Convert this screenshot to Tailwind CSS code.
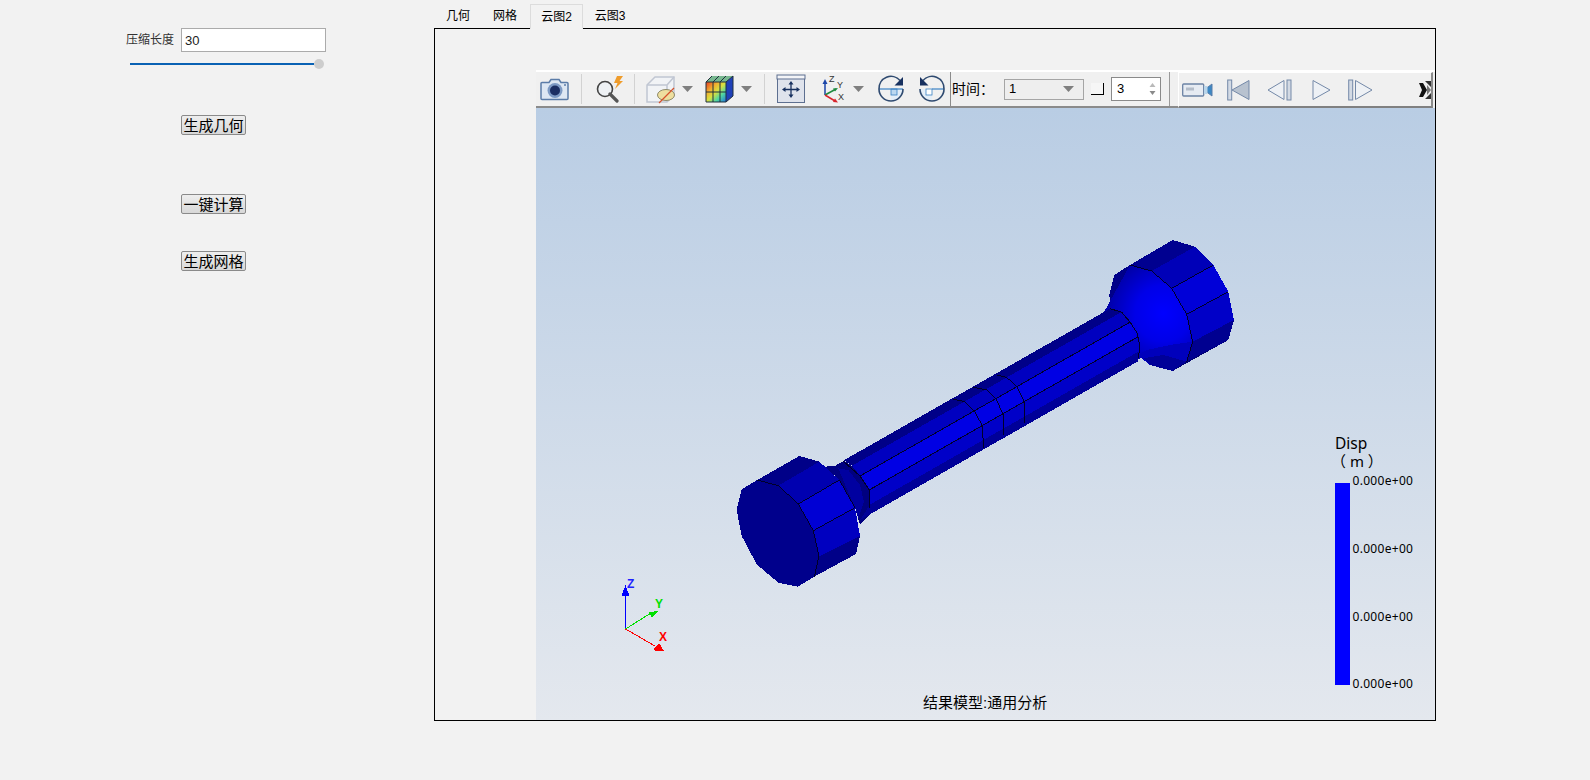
<!DOCTYPE html>
<html lang="zh">
<head>
<meta charset="UTF-8">
<title>压缩长度</title>
<script src="https://cdn.jsdelivr.net/npm/@tailwindcss/browser@4"></script>
</head>
<body class="bg-[#f2f2f2] text-black font-['Liberation_Sans','Noto_Sans_CJK_SC',sans-serif]">
<div class="flex w-[1590px] h-[780px] overflow-hidden">

  <!-- left panel -->
  <div class="w-[434px] shrink-0 flex flex-col items-start">
    <div class="mt-[28px] ml-[126px] flex items-center">
      <span class="w-[48px] text-[12px] leading-none text-[#333] whitespace-nowrap">压缩长度</span>
      <input value="30" class="ml-[7px] w-[145px] h-[24px] px-[3px] bg-white border border-[#ababab] text-[13px] text-[#222] outline-none">
    </div>
    <div class="mt-[7px] ml-[130px] w-[194px] h-[10px] flex items-center">
      <div class="flex-1 h-[2px] bg-[#0a62b4]"></div>
      <div class="w-[10px] h-[10px] rounded-full bg-[#cdcdcd]"></div>
    </div>
    <button class="mt-[46px] ml-[181px] w-[65px] h-[20px] border border-[#8a8a8a] rounded-[2px] bg-linear-to-b from-[#eeeeee] to-[#d8d8d8] text-[15px] leading-none whitespace-nowrap">生成几何</button>
    <button class="mt-[59px] ml-[181px] w-[65px] h-[20px] border border-[#8a8a8a] rounded-[2px] bg-linear-to-b from-[#eeeeee] to-[#d8d8d8] text-[15px] leading-none whitespace-nowrap">一键计算</button>
    <button class="mt-[37px] ml-[181px] w-[65px] h-[20px] border border-[#8a8a8a] rounded-[2px] bg-linear-to-b from-[#eeeeee] to-[#d8d8d8] text-[15px] leading-none whitespace-nowrap">生成网格</button>
  </div>

  <!-- right: tabs + frame -->
  <div class="w-[1002px] shrink-0 flex flex-col">
    <div class="h-[24px] mt-[4px] flex text-[12px] leading-none">
      <div class="w-[47px] pl-[12px] flex items-center">几何</div>
      <div class="w-[49px] pl-[12px] flex items-center">网格</div>
      <div class="w-[53px] h-[25px] flex items-center justify-center bg-[#f2f2f2] border border-[#dcdcdc] border-b-[#f2f2f2] z-10">云图2</div>
      <div class="w-[54px] flex items-center justify-center">云图3</div>
    </div>
    <div class="w-[1002px] h-[693px] border border-black pl-[101px] pt-[41px] flex flex-col">

      <!-- toolbar -->
      <div class="h-[38px] shrink-0 flex items-stretch bg-[#f0f0f0] border-t-2 border-t-white">
        <div class="w-[415px] flex items-center border-b-2 border-b-[#8b8b8b]">
          <svg class="ml-[4px]" width="30" height="26" viewBox="0 0 30 26">
            <path d="M2 6.500h7l2-3h8l2 3h6a1 1 0 0 1 1 1v15a1 1 0 0 1-1 1H2a1 1 0 0 1-1-1v-15a1 1 0 0 1 1-1z" fill="#dde7f3" stroke="#5b7ca8" stroke-width="1.500"/>
            <circle cx="15" cy="14.500" r="7.500" fill="#7d9ac4"/>
            <circle cx="15" cy="14.500" r="5" fill="#1c2f63"/>
            <circle cx="25" cy="9" r="1" fill="#5b7ca8"/>
          </svg>
          <div class="ml-[11px] w-px h-[30px] bg-[#d2d2d2]"></div>
          <svg class="ml-[14px]" width="28" height="28" viewBox="0 0 28 28">
            <circle cx="9" cy="14" r="7.500" fill="#eef1f4" stroke="#444" stroke-width="1.600"/>
            <path d="M14 19l7 7" stroke="#555" stroke-width="3.200" stroke-linecap="round"/>
            <path d="M21 1h6l-3.500 5H27l-8 8 2.500-6H18z" fill="#ef9c2b"/>
          </svg>
          <div class="ml-[10px] w-px h-[30px] bg-[#d2d2d2]"></div>
          <svg class="ml-[11px]" width="30" height="30" viewBox="0 0 30 30">
            <path d="M1 11l8-8h19v18l-7 7H1z" fill="#f1f3f6" stroke="#c0c6d2" stroke-width="1.500"/>
            <path d="M1 11h20v17M21 11l7-8" fill="none" stroke="#c0c6d2" stroke-width="1.500"/>
            <ellipse cx="20" cy="21" rx="8.500" ry="5.500" fill="#eedf9f" stroke="#8e8a6a"/>
            <path d="M13 29L28 14" stroke="#d6512a" stroke-width="1.200"/>
          </svg>
          <svg class="ml-[6px]" width="11" height="6" viewBox="0 0 11 6"><path d="M0 0h11L5.500 6z" fill="#7f7f7f"/></svg>
          <svg class="ml-[12px]" width="30" height="30" viewBox="0 0 30 30">
            <defs>
              <linearGradient id="rainbow" x1="0" y1="0" x2="1" y2="1">
                <stop offset="0" stop-color="#e83a20"/><stop offset=".3" stop-color="#f0b030"/><stop offset=".5" stop-color="#d8e040"/><stop offset=".72" stop-color="#50d8a0"/><stop offset="1" stop-color="#2070e0"/>
              </linearGradient>
            </defs>
            <path d="M1 8h20v20H1z" fill="url(#rainbow)"/>
            <path d="M1 8l6-6h21l-7 6z" fill="#78b890"/>
            <path d="M21 8l7-6v20l-7 6z" fill="#1f40b8"/>
            <path d="M1 8h20v20H1zM8 8v20M15 8v20M1 18h20M7 2L1 8M14 2L8 8M21 2l-6 6M21 8l7-6v20l-7 6" fill="none" stroke="#20303c"/>
          </svg>
          <svg class="ml-[6px]" width="11" height="6" viewBox="0 0 11 6"><path d="M0 0h11L5.500 6z" fill="#7f7f7f"/></svg>
          <div class="ml-[12px] w-px h-[30px] bg-[#d2d2d2]"></div>
          <svg class="ml-[11px]" width="30" height="30" viewBox="0 0 30 30">
            <rect x="1.500" y="1.500" width="27" height="27" fill="#dfe3ec" stroke="#5d6f90"/>
            <rect x="1" y="1" width="28" height="4" fill="#f3f4f7" stroke="#5d6f90"/>
            <path d="M15 9v13M9 15.500h12" stroke="#17305f" stroke-width="1.300"/>
            <path d="M15 7l-2.500 3.500h5zM15 24l-2.500-3.500h5zM6 15.500l3.500-2.500v5zM24 15.500l-3.500-2.500v5z" fill="#17305f"/>
          </svg>
          <svg class="ml-[15px]" width="26" height="30" viewBox="0 0 26 30">
            <path d="M4 21V8" stroke="#1c46a8" stroke-width="1.500"/><path d="M4 5L1.500 10h5z" fill="#1c46a8"/>
            <path d="M4 21l11-6" stroke="#1e8a3e" stroke-width="1.500"/><path d="M17 14l-5 .5 2 3z" fill="#1e8a3e"/>
            <path d="M4 21l10 6" stroke="#d8242c" stroke-width="1.500"/><path d="M17 28.500l-5-.5 2-3.500z" fill="#d8242c"/>
            <text x="8" y="8" font-size="9" fill="#333">Z</text>
            <text x="16" y="14" font-size="9" fill="#333">Y</text>
            <text x="17" y="26" font-size="9" fill="#333">X</text>
          </svg>
          <svg class="ml-[6px]" width="11" height="6" viewBox="0 0 11 6"><path d="M0 0h11L5.500 6z" fill="#7f7f7f"/></svg>
          <svg class="ml-[12px]" width="30" height="30" viewBox="0 0 30 30">
            <path d="M15 15h12a12 12 0 0 1-12 12z" fill="#e4eef8"/>
            <rect x="15" y="15" width="6" height="6" fill="#bcd8f0" stroke="#3a82c4" stroke-width=".8"/>
            <path d="M3 15h24" stroke="#3a82c4" stroke-width="1.200"/>
            <path d="M24 6.500A12 12 0 0 0 3 15a12 12 0 0 0 24 0" fill="none" stroke="#2f4a70" stroke-width="1.600"/>
            <path d="M27 3v8.500h-8.500z" fill="#17305f"/>
          </svg>
          <svg class="ml-[11px]" width="30" height="30" viewBox="0 0 30 30">
            <path d="M15 15H3a12 12 0 0 0 12 12z" fill="#e4eef8"/>
            <rect x="9" y="15" width="6" height="6" fill="#fff" stroke="#3a82c4" stroke-width=".8"/>
            <path d="M15 15h12" stroke="#3a82c4" stroke-width="1.200"/>
            <path d="M6 6.500A12 12 0 0 1 27 15a12 12 0 0 1-24 0" fill="none" stroke="#2f4a70" stroke-width="1.600"/>
            <path d="M3 3v8.500h8.500z" fill="#17305f"/>
          </svg>
          <div class="ml-[3px] w-px h-full bg-[#8b8b8b]"></div>
        </div>

        <div class="flex items-center pr-[8px] border-b-2 border-b-[#8b8b8b]">
          <span class="pl-px text-[14px] leading-none whitespace-nowrap w-[42px]">时间：</span>
          <div class="ml-[11px] w-[80px] h-[21px] border border-[#a5a5a5] bg-[#eeeeee] flex items-center justify-between pl-[4px] pr-[9px] text-[13px]">
            <span>1</span>
            <svg width="11" height="6" viewBox="0 0 11 6"><path d="M0 0h11L5.500 6z" fill="#7f7f7f"/></svg>
          </div>
          <div class="ml-[7px] w-[13px] h-[12px] border-r border-b border-black bg-[#f6f6f6]"></div>
          <div class="ml-[7px] w-[50px] h-[24px] border border-[#8a8a8a] bg-white flex items-center justify-between pl-[5px] pr-[4px] text-[13px]">
            <span>3</span>
            <svg width="7" height="14" viewBox="0 0 7 14"><path d="M3.500 1L6.500 5h-6z" fill="#b9b9b9"/><path d="M3.500 13L.5 9h6z" fill="#8a8a8a"/></svg>
          </div>
          <div class="ml-[8px] w-px h-full bg-[#9a9a9a]"></div>
        </div>

        <div class="w-[255px] flex items-center border-t border-t-white border-b-2 border-b-[#808080] border-r-2 border-r-[#8b8b8b] border-l border-l-white">
          <svg class="ml-[3px]" width="31" height="18" viewBox="0 0 31 18">
            <rect x=".7" y="3" width="21" height="12" rx="1" fill="#e6ebf2" stroke="#6b82a4" stroke-width="1.300"/>
            <rect x="4" y="6.500" width="8" height="3" fill="#b4bdc9"/>
            <path d="M22 9l8-6v12z" fill="#3d88c4" stroke="#5b7ca8"/>
            <rect x="22" y="5" width="3.500" height="8" fill="#b9d5ea"/>
          </svg>
          <svg class="ml-[14px]" width="23" height="22" viewBox="0 0 23 22">
            <rect x=".7" y="1" width="4" height="20" fill="#d3dae4" stroke="#7489a8"/>
            <path d="M22 1.500v19L5 11z" fill="#b8c2cf" stroke="#7489a8"/>
          </svg>
          <svg class="ml-[17px]" width="25" height="22" viewBox="0 0 25 22">
            <path d="M17 1.500v19L1 11z" fill="#eef1f5" stroke="#7489a8"/>
            <rect x="20" y="1" width="4" height="20" fill="#d3dae4" stroke="#7489a8"/>
          </svg>
          <svg class="ml-[20px]" width="19" height="22" viewBox="0 0 19 22"><path d="M1 1.500v19L18 11z" fill="#eef1f5" stroke="#7489a8"/></svg>
          <svg class="ml-[17px]" width="25" height="22" viewBox="0 0 25 22">
            <rect x=".7" y="1" width="4" height="20" fill="#d3dae4" stroke="#7489a8"/>
            <path d="M7.500 1.500v19L24 11z" fill="#eef1f5" stroke="#7489a8"/>
          </svg>
          <svg class="ml-[46px]" width="12" height="18" viewBox="0 0 12 18">
            <rect width="12" height="18" fill="#f0f0f0"/>
            <path d="M0 2h4l4 7-4 7H0l3-7z" fill="#111"/><path d="M6 0h6v6zM6 18h6v-6z" fill="#333"/><path d="M8 4l4 5-4 5z" fill="#777"/>
          </svg>
        </div>
      </div>

      <!-- 3D view -->
      <div class="flex-1 bg-linear-to-b from-[#b9cde4] to-[#e4e8ee]">
        <svg class="block" width="899" height="612" viewBox="536 108 899 612" shape-rendering="crispEdges">
          <defs>
            <radialGradient id="cone" gradientUnits="userSpaceOnUse" cx="250" cy="265" r="170">
              <stop offset="0" stop-color="#0000ff"/><stop offset=".5" stop-color="#0000e8"/><stop offset="1" stop-color="#0000a8"/>
            </radialGradient>
          </defs>

          <!-- right head, zoomed coordinates -->
          <g transform="translate(1080 225) scale(.33333)">
            <path d="M103 150L150 120 140 190 92 255 88 210z" fill="#000088"/>
            <path d="M150 120L215 138 275 190 320 268 338 350 320 410 278 438 210 420 185 400 150 400 120 330 70 265z" fill="url(#cone)"/>
            <path d="M150 405L200 375 270 360 338 350 320 410 278 438 210 420 185 400z" fill="#0000bc"/>
            <path d="M190 400L250 390 320 410 278 438 210 420z" fill="#000098"/>
            <path d="M150 120L278 45 345 65 215 138z" fill="#000090"/>
            <path d="M215 138L345 65 400 120 275 190z" fill="#0000b8"/>
            <path d="M275 190L400 120 445 200 320 268z" fill="#0000d8"/>
            <path d="M320 268L445 200 462 285 338 350z" fill="#0000c8"/>
            <path d="M338 350L462 285 445 345 320 410z" fill="#000090"/>
            <path d="M320 410L445 345 278 438z" fill="#000070"/>
            <path d="M150 120L215 138 275 190 320 268 338 350 320 410M275 190L400 120M320 268L445 200" fill="none" stroke="#000028" stroke-width="3"/>
          </g>

          <!-- neck behind the shaft -->
          <g transform="translate(720 430) scale(.33333)">
            <path d="M315 110L345 108 372 92 430 130 460 190 455 250 420 285 405 233 358 150z" fill="#000080"/>
            <path d="M355 115L385 120 420 165 432 215 415 265 405 233 380 175z" fill="#0000a0"/>
          </g>

          <!-- shaft -->
          <path d="M844 460.200L1110 308.600 1121 312.300 852 465.700z" fill="#000088"/>
          <path d="M852 465.700L1121 312.300 1130 322.200 860 476z" fill="#0000c0"/>
          <path d="M860 476L1130 322.200 1138 336.800 869.300 489.900z" fill="#0000e4"/>
          <path d="M869.300 489.900L1138 336.800 1140 350.700 870 504.600z" fill="#0000c8"/>
          <path d="M870 504.600L1140 350.700 1138 361.300 860 520z" fill="#000098"/>
          <path d="M860 476L1130 322.200M869.300 489.900L1138 336.800M1110 308.600L1121.700 312.300 1130 322 1137.300 333.300 1140 346.700 1138.300 358.300M843 461L860 476 869.300 489.900 870 508" fill="none" stroke="#000028"/>

          <!-- rings on the shaft -->
          <g transform="translate(900 340) scale(.33333)" fill="none" stroke="#000028" stroke-width="3">
            <path d="M160 178L195 185 225 215 248 260 250 325"/>
            <path d="M220 142L260 150 290 180 310 225 312 285"/>
            <path d="M290 105L320 112 350 140 373 185 373 250"/>
          </g>

          <!-- left head, zoomed coordinates -->
          <g transform="translate(720 430) scale(.33333)">
            <path d="M112 150L238 78 298 95 175 167z" fill="#000088"/>
            <path d="M175 167L298 95 358 150 235 222z" fill="#0000b0"/>
            <path d="M235 222L358 150 405 233 280 302z" fill="#0000d4"/>
            <path d="M280 302L405 233 420 318 295 380z" fill="#0000c0"/>
            <path d="M295 380L420 318 408 372 283 440z" fill="#000088"/>
            <path d="M65 178L112 150 175 167 235 222 280 302 297 378 283 440 233 470 175 458 110 403 65 318 50 240z" fill="#00008c"/>
            <path d="M112 150L175 167 235 222 280 302 297 378 283 440M235 222L358 150M280 302L405 233M358 150L405 233" fill="none" stroke="#000028" stroke-width="3"/>
          </g>

          <!-- triad -->
          <path d="M625.500 629V592" stroke="#0000ff"/>
          <path d="M625.500 585l-4 11h8z" fill="#0000ff"/>
          <path d="M625.500 629L651 613" stroke="#00e000"/>
          <path d="M658 611l-9 1 3 6z" fill="#00e000"/>
          <path d="M625.500 629L655 646" stroke="#ff0000"/>
          <path d="M664 651l-5-8-5 5 1 3z" fill="#ff0000"/>
          <g shape-rendering="auto" font-weight="700" font-size="12">
            <text x="627" y="588" fill="#2020ff">Z</text>
            <text x="655" y="608" fill="#00e000">Y</text>
            <text x="659" y="641" fill="#ff0000">X</text>
          </g>

          <!-- legend -->
          <rect x="1335" y="483" width="15" height="202" fill="#0000ff"/>
          <g shape-rendering="auto">
            <text x="1335" y="449" font-size="15.500" class="font-['Noto_Sans',sans-serif]">Disp</text>
            <text x="1331" y="467" font-size="15" class="font-['Noto_Sans','Noto_Sans_CJK_SC',sans-serif]">（ m ）</text>
            <g font-size="12" class="font-['Noto_Sans',sans-serif] tracking-[0.3px]">
              <text x="1352.500" y="485">0.000e+00</text>
              <text x="1352.500" y="553">0.000e+00</text>
              <text x="1352.500" y="620.500">0.000e+00</text>
              <text x="1352.500" y="688">0.000e+00</text>
            </g>
            <text x="923" y="708" font-size="15">结果模型:通用分析</text>
          </g>
        </svg>
      </div>
    </div>
  </div>
</div>
</body>
</html>
